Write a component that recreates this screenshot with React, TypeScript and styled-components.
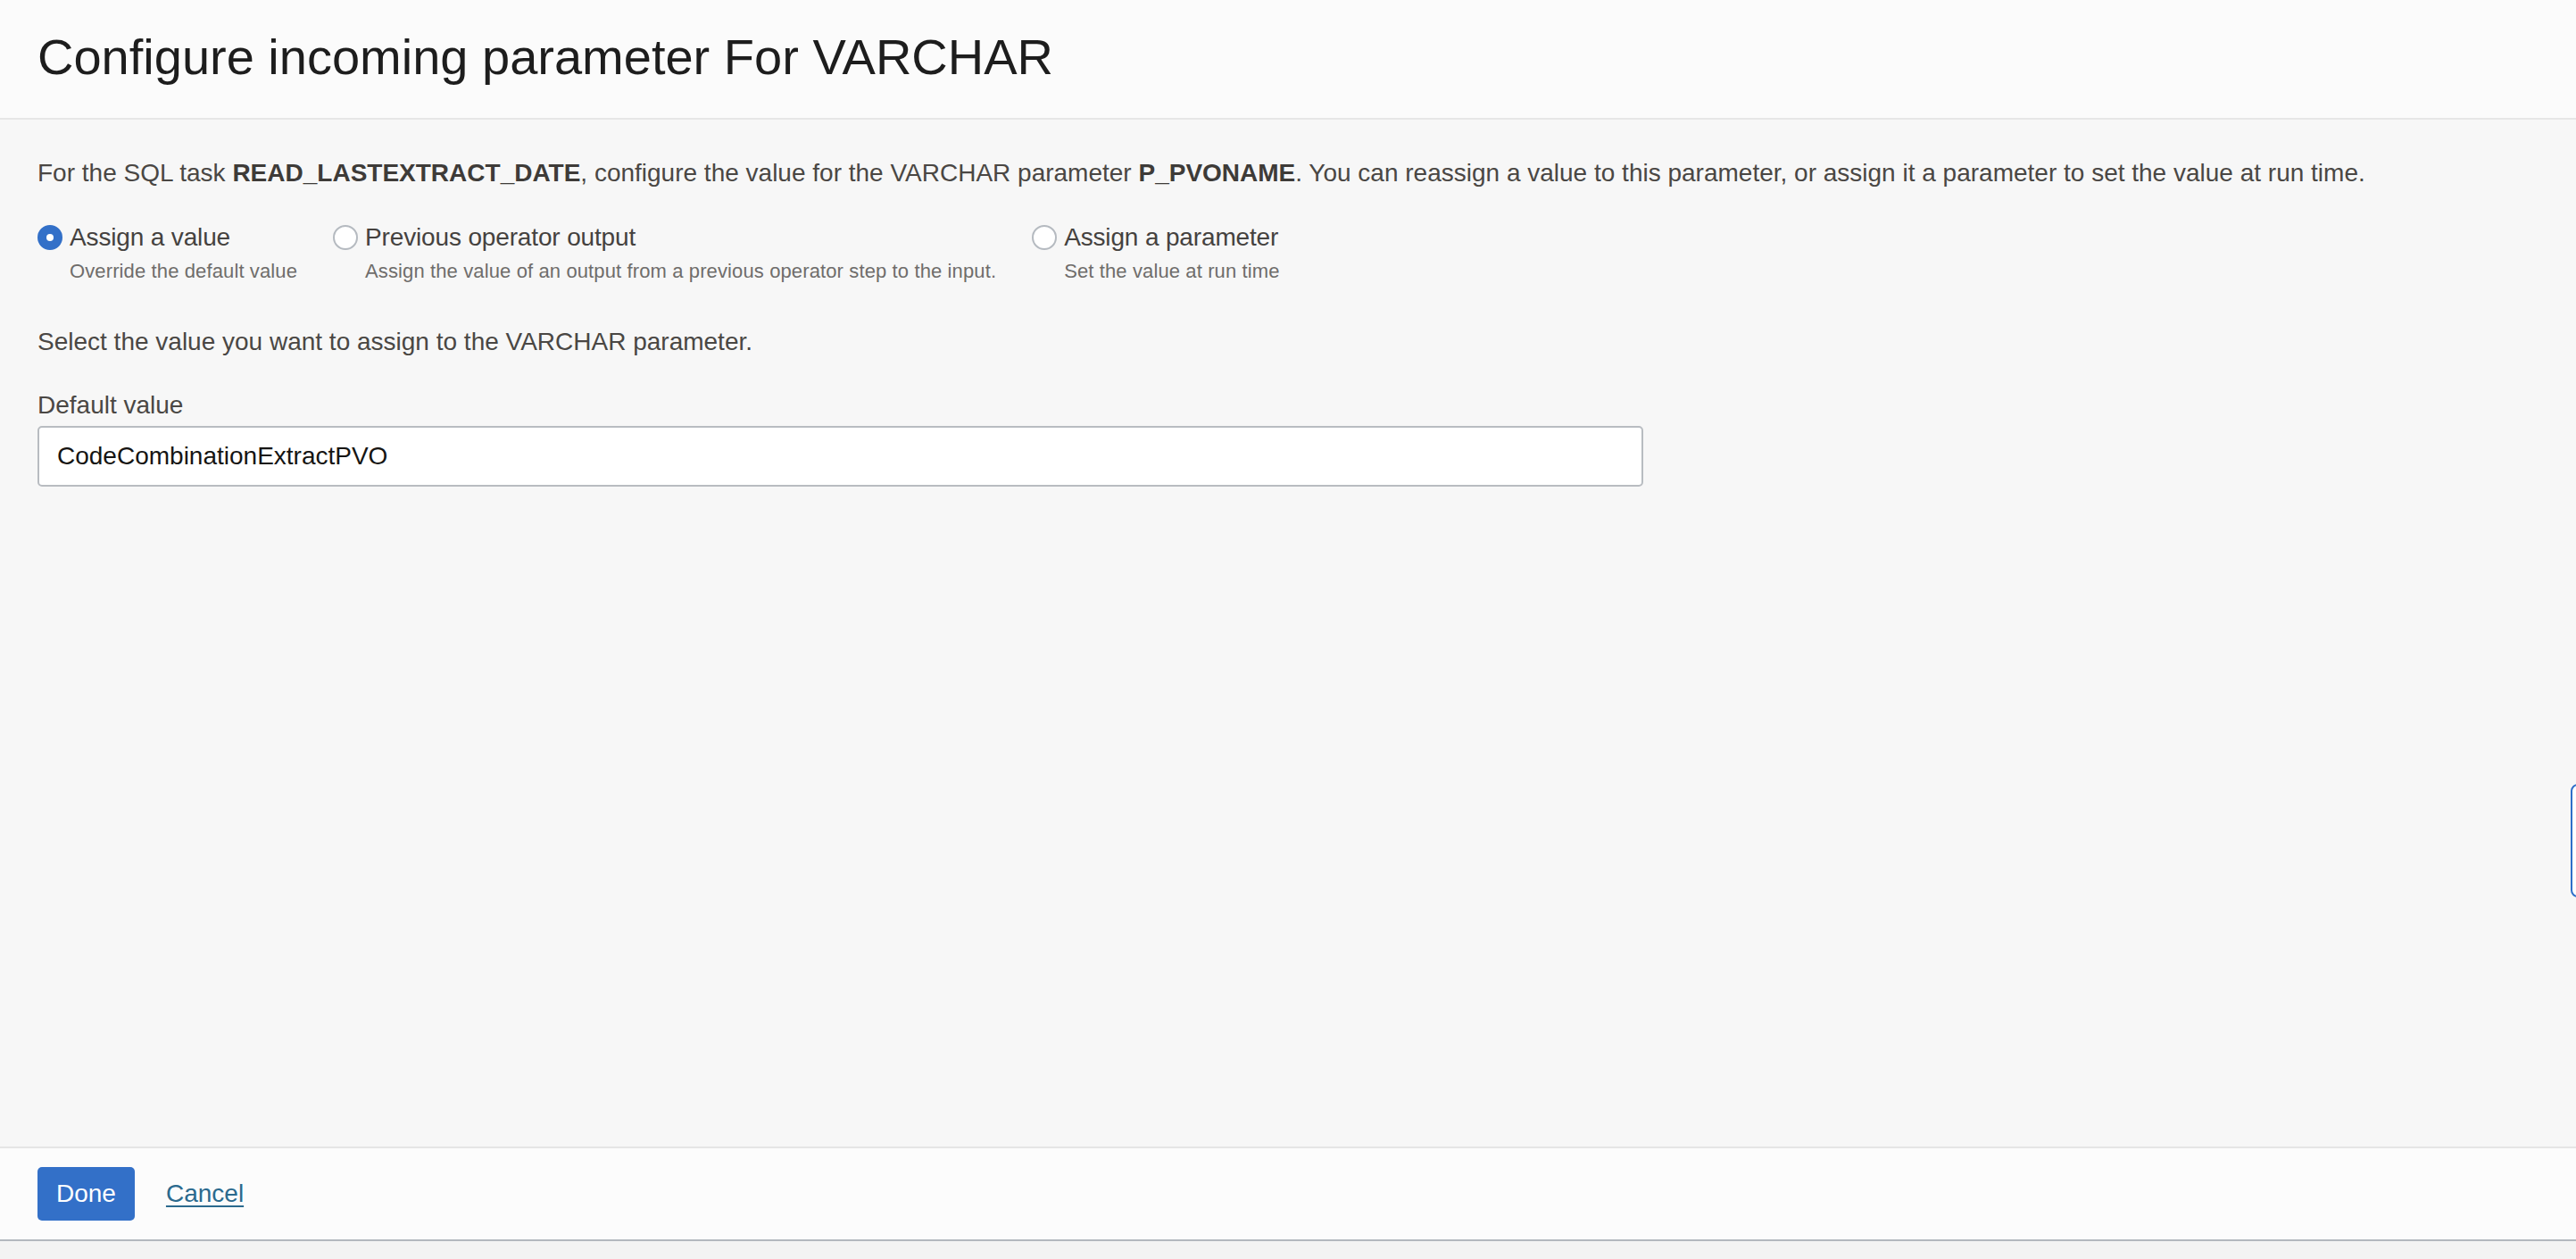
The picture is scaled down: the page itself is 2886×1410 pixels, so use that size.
import React from "react";
import styled, { createGlobalStyle } from "styled-components";

const GlobalStyle = createGlobalStyle`
  html, body {
    margin: 0;
    padding: 0;
    background: #f7f7f7;
    font-family: "Liberation Sans", Arial, Helvetica, sans-serif;
    overflow: hidden;
  }
  * { box-sizing: border-box; }
`;

const Page = styled.div`
  position: relative;
  display: flex;
  flex-direction: column;
  height: 1410px;
  width: 100%;
  overflow: hidden;
  background: #f7f7f7;
`;

const Header = styled.header`
  height: 134px;
  flex: 0 0 auto;
  background: #fbfbfb;
  border-bottom: 2px solid #e6e6e6;
  padding: 36px 42px 0;
`;

const Title = styled.h1`
  margin: 0;
  font-size: 56px;
  line-height: 56px;
  font-weight: 400;
  color: #1d1d1d;
`;

const Main = styled.main`
  flex: 1 1 auto;
  padding: 40px 42px 0;
  display: flex;
  flex-direction: column;
`;

const Description = styled.p`
  margin: 0;
  font-size: 28px;
  line-height: 40px;
  color: #4a4744;
  white-space: nowrap;

  strong {
    font-weight: 700;
    color: #3e3b38;
  }
`;

const RadioGroup = styled.div`
  display: flex;
  gap: 40px;
  margin-top: 32px;
`;

const Option = styled.label`
  display: grid;
  grid-template-columns: 28px auto;
  column-gap: 8px;
  align-items: center;
  cursor: pointer;
`;

const RadioCircle = styled.span<{ $checked?: boolean }>`
  width: 28px;
  height: 28px;
  border-radius: 50%;
  display: flex;
  align-items: center;
  justify-content: center;
  background: ${(p) => (p.$checked ? "#3370c8" : "#ffffff")};
  border: 2px solid ${(p) => (p.$checked ? "#3370c8" : "#b5bac0")};

  &::after {
    content: "";
    display: ${(p) => (p.$checked ? "block" : "none")};
    width: 8px;
    height: 8px;
    border-radius: 50%;
    background: #ffffff;
  }
`;

const OptionLabel = styled.span`
  font-size: 28px;
  line-height: 40px;
  letter-spacing: -0.15px;
  color: #45423f;
  white-space: nowrap;
`;

const OptionHint = styled.span`
  grid-column: 2;
  margin-top: 3px;
  font-size: 22px;
  line-height: 30px;
  letter-spacing: 0.12px;
  color: #6f6d6b;
  white-space: nowrap;
`;

const Instruction = styled.p`
  margin: 44px 0 0;
  font-size: 28px;
  line-height: 40px;
  color: #4a4744;
`;

const FieldLabel = styled.label`
  margin-top: 31px;
  font-size: 28px;
  line-height: 40px;
  color: #4a4744;
`;

const TextInput = styled.input`
  margin-top: 3px;
  width: 1799px;
  height: 68px;
  padding: 0 20px;
  border: 2px solid #b8bcc1;
  border-radius: 5px;
  background: #ffffff;
  font-family: "Liberation Sans", Arial, Helvetica, sans-serif;
  font-size: 28px;
  color: #161513;
  outline: none;
`;

const Footer = styled.footer`
  flex: 0 0 auto;
  height: 106px;
  background: #fcfcfc;
  border-top: 2px solid #e5e5e5;
  border-bottom: 2px solid #b3b8be;
  padding: 0 42px;
  display: flex;
  align-items: center;
  gap: 35px;
`;

const BottomStrip = styled.div`
  flex: 0 0 20px;
  background: #f3f3f3;
`;

const PrimaryButton = styled.button`
  height: 60px;
  padding: 0 21px;
  border: none;
  border-radius: 5px;
  background: #3370c8;
  color: #ffffff;
  font-family: "Liberation Sans", Arial, Helvetica, sans-serif;
  font-size: 28px;
  cursor: pointer;
`;

const LinkButton = styled.a`
  font-size: 28px;
  color: #2b6a8e;
  text-decoration: underline;
  text-underline-offset: 4px;
  cursor: pointer;
`;

const EdgeTab = styled.div`
  position: absolute;
  top: 878px;
  right: -14px;
  width: 20px;
  height: 127px;
  border: 2px solid #2f6fc9;
  border-radius: 8px;
  background: #ffffff;
`;

const options = [
  { label: "Assign a value", hint: "Override the default value", checked: true },
  {
    label: "Previous operator output",
    hint: "Assign the value of an output from a previous operator step to the input.",
    checked: false,
  },
  { label: "Assign a parameter", hint: "Set the value at run time", checked: false },
];

export default function App() {
  return (
    <Page>
      <GlobalStyle />
      <Header>
        <Title>Configure incoming parameter For VARCHAR</Title>
      </Header>
      <Main>
        <Description>
          For the SQL task <strong>READ_LASTEXTRACT_DATE</strong>, configure the value for the VARCHAR
          parameter <strong>P_PVONAME</strong>. You can reassign a value to this parameter, or assign it a
          parameter to set the value at run time.
        </Description>
        <RadioGroup>
          {options.map((o) => (
            <Option key={o.label}>
              <RadioCircle $checked={o.checked} />
              <OptionLabel>{o.label}</OptionLabel>
              <OptionHint>{o.hint}</OptionHint>
            </Option>
          ))}
        </RadioGroup>
        <Instruction>Select the value you want to assign to the VARCHAR parameter.</Instruction>
        <FieldLabel>Default value</FieldLabel>
        <TextInput defaultValue="CodeCombinationExtractPVO" />
      </Main>
      <Footer>
        <PrimaryButton>Done</PrimaryButton>
        <LinkButton>Cancel</LinkButton>
      </Footer>
      <BottomStrip />
      <EdgeTab />
    </Page>
  );
}
